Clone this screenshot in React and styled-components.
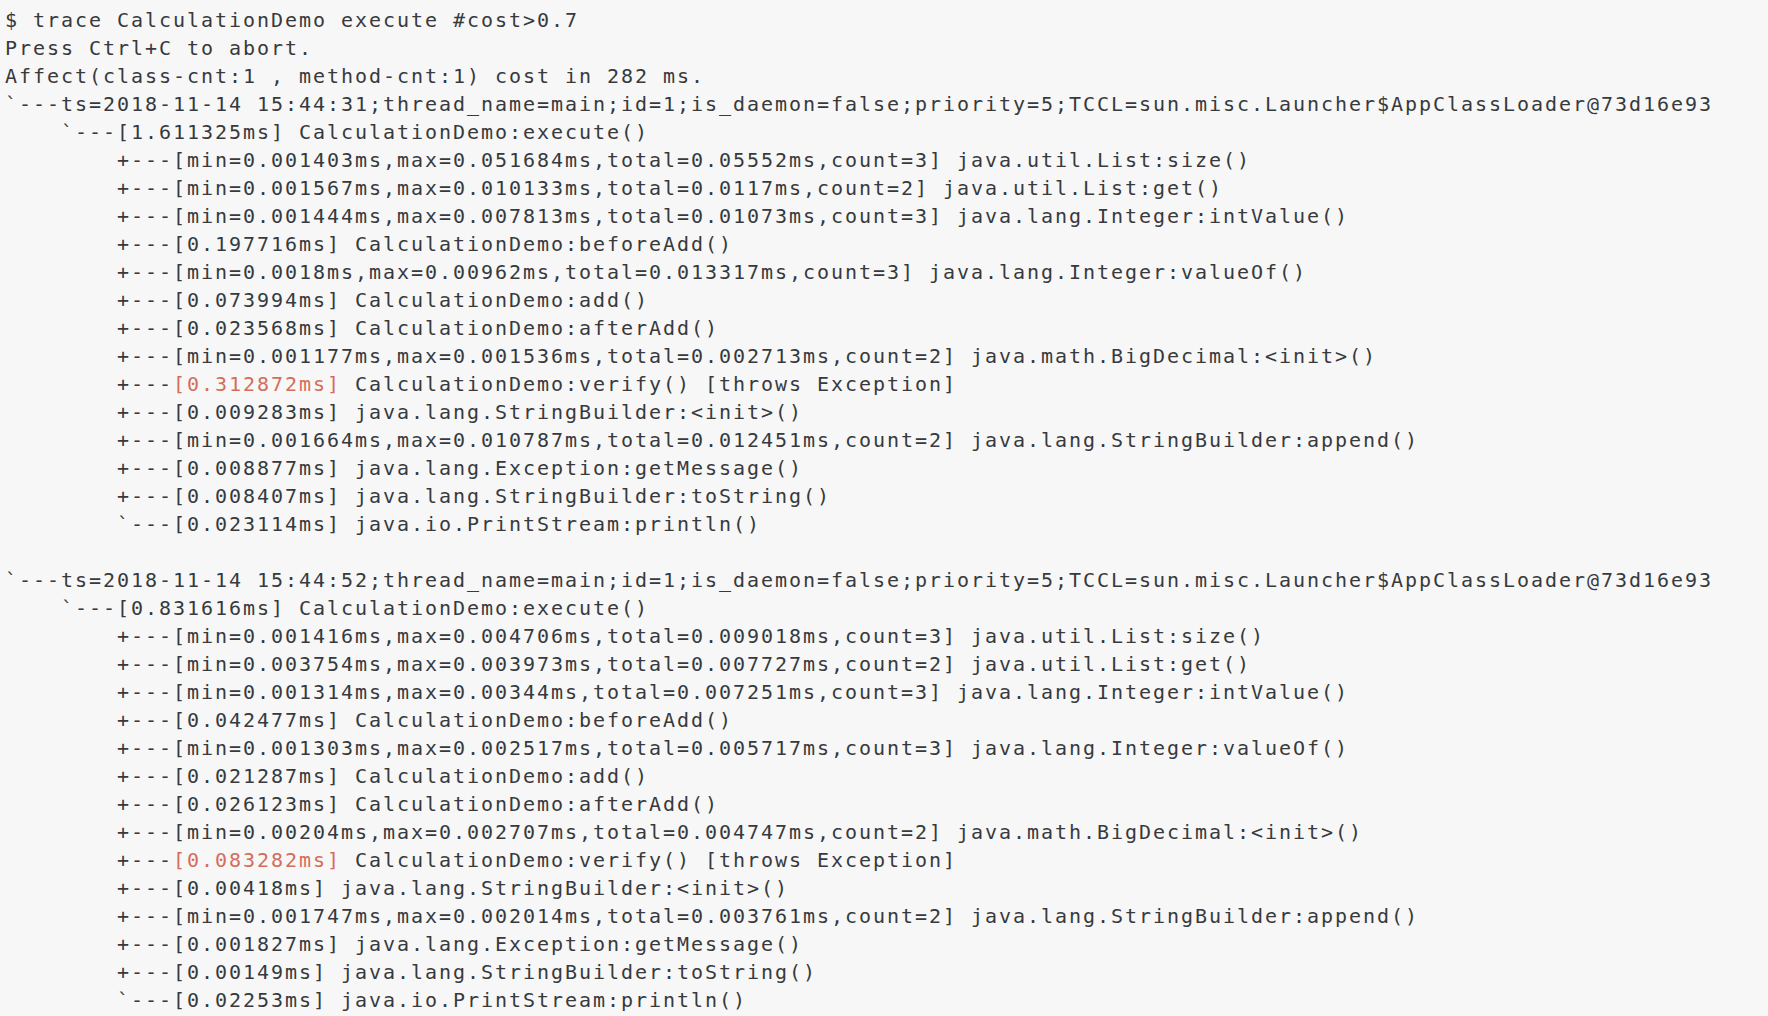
import React from "react"
import styled, { createGlobalStyle } from "styled-components"

const GlobalStyle = createGlobalStyle`
  html, body {
    margin: 0;
    padding: 0;
    background: #f7f7f7;
  }
`

const Terminal = styled.div`
  min-height: 1016px;
  box-sizing: border-box;
  padding: 6px 0 0 5px;
  background: #f7f7f7;
  color: #363a3e;
  font-family: "DejaVu Sans Mono", Menlo, monospace;
  font-size: 20px;
  letter-spacing: 1.96px;
  line-height: 28px;
  white-space: pre;
`

const Line = styled.div`
  height: 28px;
`

const Cost = styled.span`
  color: ${props => (props.hot ? "#d46d5c" : "inherit")};
`

const header = [
  "$ trace CalculationDemo execute #cost>0.7",
  "Press Ctrl+C to abort.",
  "Affect(class-cnt:1 , method-cnt:1) cost in 282 ms.",
]

const blocks = [
  {
    ts: "2018-11-14 15:44:31",
    total: "1.611325ms",
    calls: [
      ["min=0.001403ms,max=0.051684ms,total=0.05552ms,count=3", "java.util.List:size()"],
      ["min=0.001567ms,max=0.010133ms,total=0.0117ms,count=2", "java.util.List:get()"],
      ["min=0.001444ms,max=0.007813ms,total=0.01073ms,count=3", "java.lang.Integer:intValue()"],
      ["0.197716ms", "CalculationDemo:beforeAdd()"],
      ["min=0.0018ms,max=0.00962ms,total=0.013317ms,count=3", "java.lang.Integer:valueOf()"],
      ["0.073994ms", "CalculationDemo:add()"],
      ["0.023568ms", "CalculationDemo:afterAdd()"],
      ["min=0.001177ms,max=0.001536ms,total=0.002713ms,count=2", "java.math.BigDecimal:<init>()"],
      ["0.312872ms", "CalculationDemo:verify() [throws Exception]", true],
      ["0.009283ms", "java.lang.StringBuilder:<init>()"],
      ["min=0.001664ms,max=0.010787ms,total=0.012451ms,count=2", "java.lang.StringBuilder:append()"],
      ["0.008877ms", "java.lang.Exception:getMessage()"],
      ["0.008407ms", "java.lang.StringBuilder:toString()"],
      ["0.023114ms", "java.io.PrintStream:println()"],
    ],
  },
  {
    ts: "2018-11-14 15:44:52",
    total: "0.831616ms",
    calls: [
      ["min=0.001416ms,max=0.004706ms,total=0.009018ms,count=3", "java.util.List:size()"],
      ["min=0.003754ms,max=0.003973ms,total=0.007727ms,count=2", "java.util.List:get()"],
      ["min=0.001314ms,max=0.00344ms,total=0.007251ms,count=3", "java.lang.Integer:intValue()"],
      ["0.042477ms", "CalculationDemo:beforeAdd()"],
      ["min=0.001303ms,max=0.002517ms,total=0.005717ms,count=3", "java.lang.Integer:valueOf()"],
      ["0.021287ms", "CalculationDemo:add()"],
      ["0.026123ms", "CalculationDemo:afterAdd()"],
      ["min=0.00204ms,max=0.002707ms,total=0.004747ms,count=2", "java.math.BigDecimal:<init>()"],
      ["0.083282ms", "CalculationDemo:verify() [throws Exception]", true],
      ["0.00418ms", "java.lang.StringBuilder:<init>()"],
      ["min=0.001747ms,max=0.002014ms,total=0.003761ms,count=2", "java.lang.StringBuilder:append()"],
      ["0.001827ms", "java.lang.Exception:getMessage()"],
      ["0.00149ms", "java.lang.StringBuilder:toString()"],
      ["0.02253ms", "java.io.PrintStream:println()"],
    ],
  },
]

const TraceBlock = ({ ts, total, calls }) => (
  <>
    <Line>
      {"`---ts=" + ts + ";thread_name=main;id=1;is_daemon=false;priority=5;TCCL=sun.misc.Launcher$AppClassLoader@73d16e93"}
    </Line>
    <Line>{"    `---[" + total + "] CalculationDemo:execute()"}</Line>
    {calls.map(([cost, method, hot], i) => (
      <Line key={i}>
        {(i === calls.length - 1 ? "        `---" : "        +---")}
        <Cost hot={hot}>{"[" + cost + "]"}</Cost>
        {" " + method}
      </Line>
    ))}
  </>
)

const App = () => (
  <>
    <GlobalStyle />
    <Terminal>
      {header.map(text => (
        <Line key={text}>{text}</Line>
      ))}
      {blocks.map((block, i) => (
        <React.Fragment key={block.ts}>
          {i > 0 && <Line />}
          <TraceBlock {...block} />
        </React.Fragment>
      ))}
    </Terminal>
  </>
)

export default App
